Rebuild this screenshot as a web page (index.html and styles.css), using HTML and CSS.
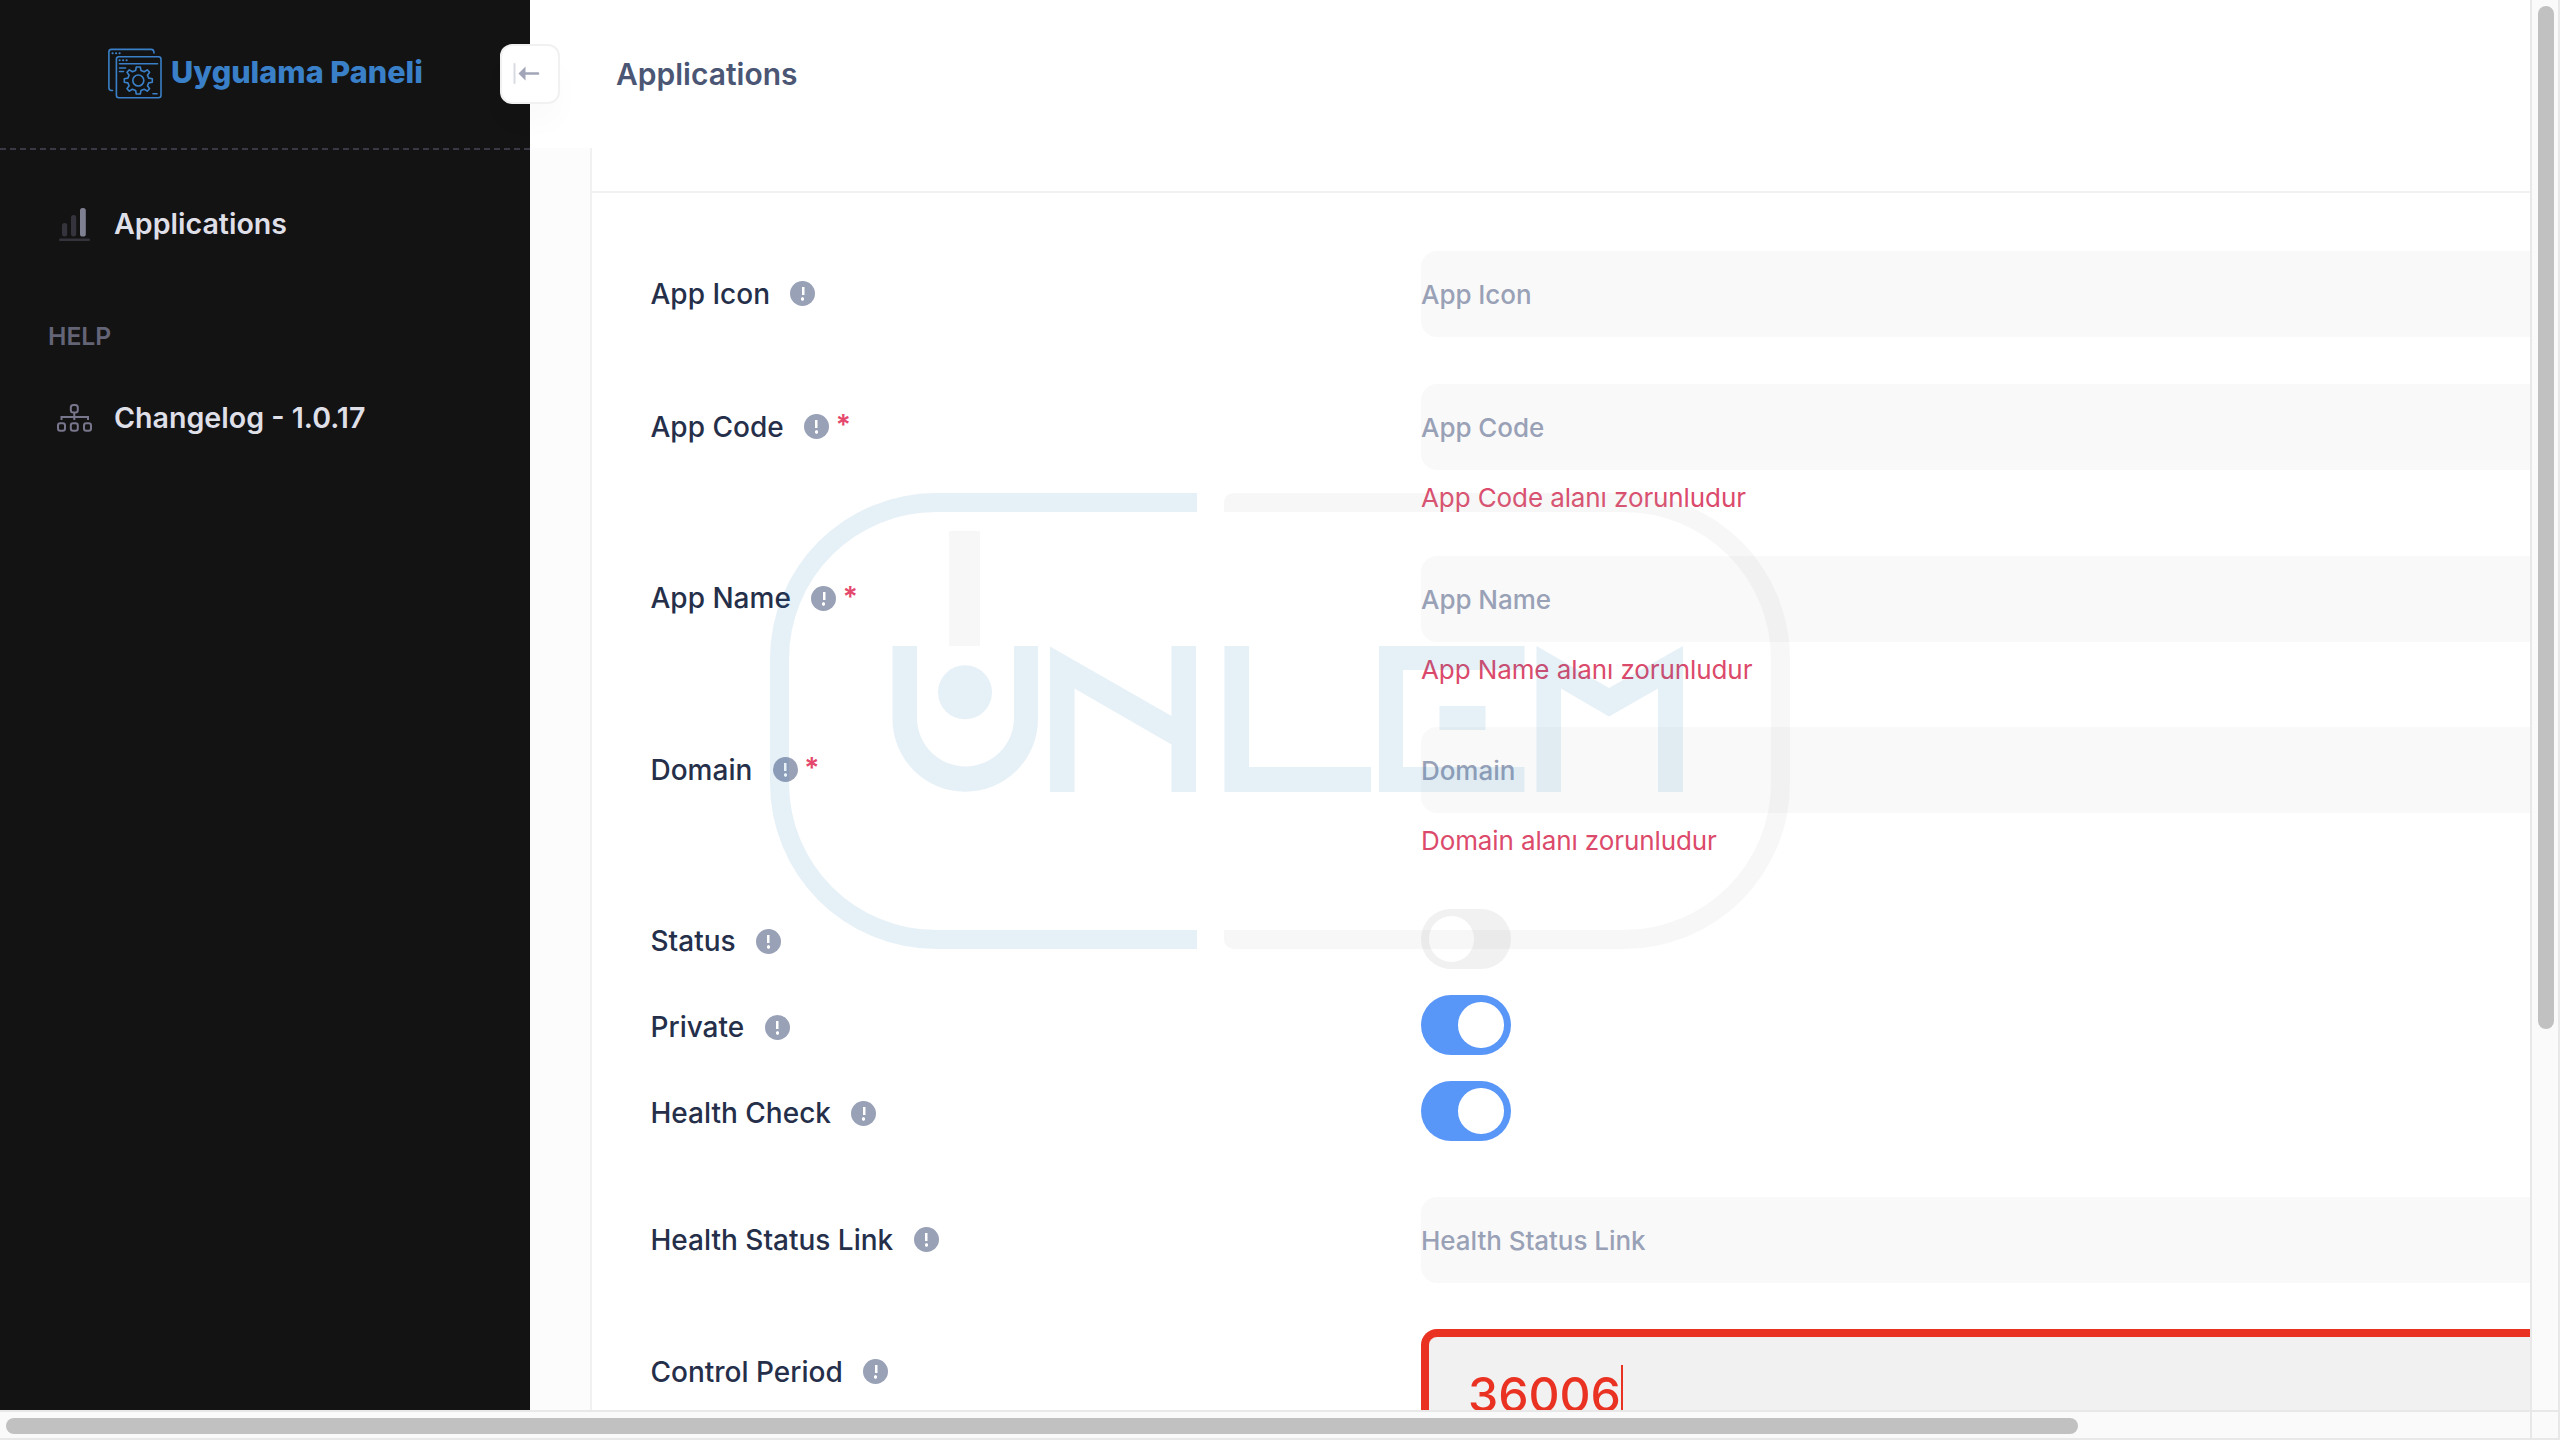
FILE: index.html
```html
<!DOCTYPE html>
<html lang="tr">
<head>
<meta charset="utf-8">
<title>Applications</title>
<link rel="stylesheet" href="styles.css">
</head>
<body>
<div class="window">
  <div class="viewport">
    <aside class="sidebar">
      <div class="brand">
        <svg class="brand-icon" viewBox="0 0 54 50" fill="none" stroke="#3a80c8" stroke-width="1.6" stroke-linecap="round">
          <path d="M4.500 42H3.500Q.9 42 .9 39V3.500Q.9 .9 3.500 .9H43Q46 .9 46 4.500"/>
          <rect x="8.400" y="8.200" width="44.600" height="41" rx="2.500"/>
          <path d="M11.500 15.200H49.500"/>
          <path d="M4.500 4.700h.2M8 4.700h.2M11.500 4.700h.2M11.500 11.700h.2M15 11.700h.2M18.500 11.700h.2" stroke-width="2"/>
          <path d="M11.500 19.500H17.500M11.500 23H15.500M45 45.200H49"/>
          <circle cx="30.300" cy="32" r="5.500"/>
          <path stroke-linejoin="round" d="M28.300 18.500H32.300L33 22 36.200 23.300 39.300 21.400 41.600 23.700 39.500 26.800 40.700 29.600 44.300 30.200V33.800L40.700 34.400 39.500 37.200 41.600 40.300 39.300 42.600 36.200 40.700 33 42 32.300 45.500H28.300L27.600 42 24.400 40.700 21.300 42.600 19 40.300 21.100 37.200 19.900 34.400 16.300 33.800V30.200L19.900 29.600 21.100 26.800 19 23.700 21.300 21.400 24.400 23.300 27.600 22Z"/>
        </svg>
        <span class="brand-name">Uygulama Paneli</span>
      </div>
      <nav class="menu">
        <a class="menu-item">
          <svg class="menu-icon" viewBox="0 0 36 36" fill="#35343d">
            <rect x="6" y="18" width="5.200" height="13.500" rx="2.500"/>
            <rect x="15" y="10" width="5.200" height="21.500" rx="2.500"/>
            <rect x="24" y="3" width="5.800" height="28.500" rx="2.600" fill="#808093"/>
            <rect x="3" y="33.500" width="31" height="2.500" rx="1.200"/>
          </svg>
          <span>Applications</span>
        </a>
        <div class="menu-heading">HELP</div>
        <a class="menu-item">
          <svg class="menu-icon" viewBox="0 0 36 36" fill="none" stroke="#77768c" stroke-width="2">
            <rect x="14.800" y="6" width="7" height="7.500" rx="2.500"/>
            <path d="M18.300 13.500V21M5.500 21V18H32V21"/>
            <rect x="2" y="24.300" width="7" height="7.500" rx="2.300"/>
            <rect x="14.800" y="24.300" width="7" height="7.500" rx="2.300"/>
            <rect x="28" y="24.300" width="7" height="7.500" rx="2.300"/>
          </svg>
          <span>Changelog - 1.0.17</span>
        </a>
      </nav>
      <button class="collapse" type="button">
        <svg viewBox="0 0 30 30" width="30" height="30">
          <rect x=".5" y="4" width="2" height="21" rx="1" fill="#a1a5b7" opacity=".4"/>
          <path d="M5.500 14.500L12.500 7.500V13.200H25Q26.300 13.200 26.300 14.500T25 15.800H12.500V21.500Z" fill="#a1a5b7"/>
        </svg>
      </button>
    </aside>
    <main class="main">
      <header class="topbar"><h1>Applications</h1></header>
      <div class="content">
        <div class="card">
          <div class="card-head"></div>
          <form class="form">
            <div class="row"><div class="label"><span>App Icon</span><i class="hint"></i></div><div class="field"><div class="input">App Icon</div></div></div>
            <div class="row tall"><div class="label"><span>App Code</span><i class="hint"></i><b class="req">*</b></div><div class="field"><div class="input">App Code</div><div class="error">App Code alanı zorunludur</div></div></div>
            <div class="row tall"><div class="label"><span>App Name</span><i class="hint"></i><b class="req">*</b></div><div class="field"><div class="input">App Name</div><div class="error">App Name alanı zorunludur</div></div></div>
            <div class="row last-tall"><div class="label"><span>Domain</span><i class="hint"></i><b class="req">*</b></div><div class="field"><div class="input">Domain</div><div class="error">Domain alanı zorunludur</div></div></div>
            <div class="row switch-row"><div class="label"><span>Status</span><i class="hint"></i></div><div class="field"><div class="switch"></div></div></div>
            <div class="row switch-row"><div class="label"><span>Private</span><i class="hint"></i></div><div class="field"><div class="switch on"></div></div></div>
            <div class="row switch-row last-switch"><div class="label"><span>Health Check</span><i class="hint"></i></div><div class="field"><div class="switch on"></div></div></div>
            <div class="row link-row"><div class="label"><span>Health Status Link</span><i class="hint"></i></div><div class="field"><div class="input">Health Status Link</div></div></div>
            <div class="row"><div class="label"><span>Control Period</span><i class="hint"></i></div><div class="field"><div class="input active"><span>36006</span><i class="caret"></i></div></div></div>
          </form>
        </div>
      </div>
    </main>
    <svg class="watermark" viewBox="770 492 1020 458">
      <g fill="#147ab8">
        <path d="M1197 493H936A166 166 0 0 0 770 659V783A166 166 0 0 0 936 949H1197V930H936A147 147 0 0 1 789 783V659A147 147 0 0 1 936 512H1197Z"/>
        <path d="M892.500 646H917V718A48.500 48.500 0 0 0 1014 718V646H1038V719A72.750 72.750 0 0 1 892.500 719Z"/>
        <circle cx="965" cy="692.300" r="27"/>
        <path d="M1050 646.500L1171.500 716V646H1196V792H1171.500V744.500L1074.500 688.500V792H1050Z"/>
        <path d="M1224.500 646H1249V767H1371V792H1224.500Z"/>
        <path d="M1379 646H1524.500V670H1403V767H1524.500V792H1379ZM1439.500 706H1485.500V730H1439.500Z"/>
        <path d="M1536.500 646L1609 688 1683 646V792H1658V688.500L1609 716.500 1561 688.500V792H1536.500Z"/>
      </g>
      <path fill="#b4b4b4" d="M949 531H980V646H949ZM1234 493H1624A166 166 0 0 1 1790 659V783A166 166 0 0 1 1624 949H1234Q1224 947 1224 939V930H1624A147 147 0 0 0 1771 783V659A147 147 0 0 0 1624 512H1224V503Q1224 494 1234 493Z"/>
    </svg>
  </div>
  <div class="vbar"><div class="vthumb"></div></div>
  <div class="hbar"><div class="hthumb"></div></div>
</div>
</body>
</html>
```

FILE: styles.css
```css
* { box-sizing: border-box; }
body {
  margin: 0;
  font-family: Inter, "Liberation Sans", sans-serif;
  color: #252f4a;
  overflow: hidden;
}
.window {
  width: 2560px;
  height: 1440px;
  display: grid;
  grid-template: 1410px 30px / 2530px 30px;
  background: #fafafa;
}
.viewport {
  display: flex;
  overflow: hidden;
  position: relative;
  background: #fff;
}

/* Sidebar */
.sidebar {
  width: 530px;
  flex: none;
  background: #131313;
  position: relative;
}
.brand {
  height: 150px;
  padding: 48px 0 0 108px;
  display: flex;
  align-items: flex-start;
  gap: 9px;
  background: repeating-linear-gradient(90deg, #393844 0 6px, transparent 6px 10.077px) left bottom / 100% 2px no-repeat;
}
.brand-icon { width: 54px; height: 51px; }
.brand-name {
  font-size: 30.600px;
  line-height: 48px;
  font-weight: 800;
  color: #3a80c8;
  white-space: nowrap;
}
.menu { padding-top: 43px; }
.menu-item {
  display: flex;
  align-items: center;
  height: 60px;
  padding-left: 56px;
  gap: 22px;
  font-size: 28.600px;
  font-weight: 600;
  color: #dfdfe8;
}
.menu-icon { width: 36px; height: 36px; }
.menu-heading {
  height: 134px;
  padding: 0 0 0 48px;
  line-height: 167px;
  font-size: 24.700px;
  font-weight: 600;
  color: #646477;
}
.collapse {
  position: absolute;
  left: 500px;
  top: 44px;
  width: 60px;
  height: 60px;
  padding: 0 0 0 11px;
  display: flex;
  align-items: center;
  z-index: 2;
  border: 2px solid #f1f1f2;
  border-radius: 12px;
  background: #fff;
  box-shadow: 0 20px 28px rgba(0, 0, 0, .02);
}

/* Main area */
.main { flex: 1; min-width: 0; display: flex; flex-direction: column; background: #fff; }
.topbar { height: 148px; flex: none; padding-left: 86px; }
.topbar h1 {
  margin: 0;
  line-height: 148px;
  font-size: 30px;
  font-weight: 600;
  color: #4b5675;
}
.content { flex: 1; padding-left: 60px; background: #fcfcfc; overflow: hidden; }
.card { height: 1300px; border-left: 2px solid #f1f1f2; background: #fff; }
.card-head { height: 45px; border-bottom: 2px solid #f1f1f2; }
.form { padding: 58px 0 0 58.500px; }
.row { display: flex; height: 133px; }
.row.tall { height: 171.500px; }
.row.last-tall { height: 182px; }
.row.switch-row { height: 86px; }
.row.last-switch { height: 116px; }
.row.link-row { height: 132px; }
.label {
  width: 770.500px;
  height: 85px;
  flex: none;
  display: flex;
  align-items: center;
  font-size: 28px;
  font-weight: 500;
}
.switch-row .label { height: 64px; }
.hint {
  width: 25px;
  height: 25px;
  margin-left: 20.500px;
  border-radius: 50%;
  background:
    radial-gradient(circle at 50% 18px, #fff 1.400px, transparent 2px),
    linear-gradient(#fff, #fff) 50% 6px / 2.500px 8px no-repeat,
    #99a1b7;
}
.req { margin: -3px 0 0 6.500px; color: #e5486d; font-weight: 600; }
.field { flex: 1; min-width: 0; }
.input {
  height: 86px;
  line-height: 87px;
  border-radius: 16px 0 0 16px;
  background: #f9f9f9;
  font-size: 26px;
  font-weight: 500;
  letter-spacing: -.05px;
  color: #99a1b7;
}
.input.active {
  display: flex;
  align-items: flex-start;
  height: 130px;
  padding: 27px 0 0 39px;
  border: 8px solid #ea3223;
  border-right: 0;
  background: #f1f1f1;
  font-size: 48.200px;
  line-height: 61px;
  color: #ea3223;
}
.caret { width: 2px; height: 60px; margin-top: 1px; background: #ea3223; }
.error { padding-top: 10px; line-height: 36px; font-size: 26px; letter-spacing: -.1px; color: #dc4a6b; }
.switch { width: 90px; height: 60px; padding: 7px 7.500px; border-radius: 30px; background: #f1f1f1; }
.switch::before {
  content: "";
  display: block;
  width: 45.500px;
  height: 45.500px;
  border-radius: 50%;
  background: #fff;
}
.switch.on { background: #5896f8; }
.switch.on::before { margin-left: auto; }

.watermark { position: absolute; left: 770px; top: 492px; width: 1020px; height: 458px; opacity: .1; }

/* Scrollbars */
.vbar { grid-row: 1 / 3; grid-column: 2; padding: 6px 0 0 6px; border: solid #e8e8e8; border-width: 0 2px; }
.vthumb { width: 16px; height: 1023px; border-radius: 8px; background: #c1c1c1; }
.hbar { grid-row: 2; grid-column: 1 / 3; padding: 6px 0 0 6px; border: solid #e8e8e8; border-width: 2px 0; z-index: 1; }
.hthumb { width: 2072px; height: 16px; border-radius: 8px; background: #c1c1c1; }
```
